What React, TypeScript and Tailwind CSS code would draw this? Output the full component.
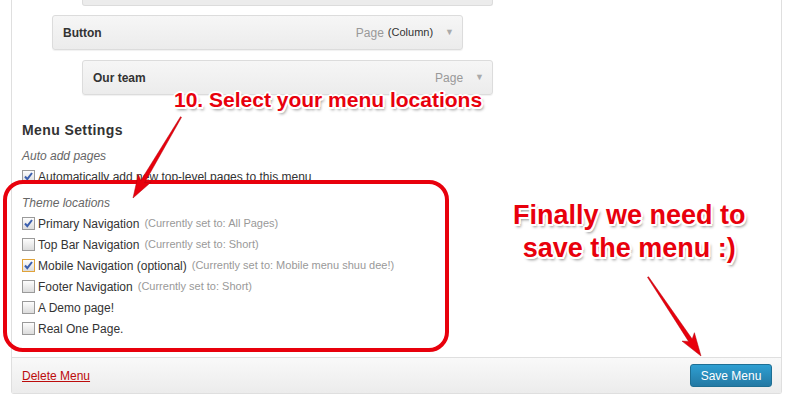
import React from 'react';

type Pt = [number, number];

// tapered arrow polygon, Skitch style
const arrowPoints = (from: Pt, to: Pt) => {
  const dx = to[0] - from[0];
  const dy = to[1] - from[1];
  const len = Math.sqrt(dx * dx + dy * dy);
  const ux = dx / len;
  const uy = dy / len;
  const nx = -uy;
  const ny = ux;
  const headLen = 22;
  const headW = 7.5;
  const at = (d: number, w: number): string =>
    `${(from[0] + ux * d + nx * w).toFixed(1)},${(from[1] + uy * d + ny * w).toFixed(1)}`;
  const neck = len - headLen;
  return [
    at(0, 0.6),
    at(neck + 3, 2.2),
    at(neck - 1, headW),
    at(len, 0),
    at(neck - 1, -headW),
    at(neck + 3, -2.2),
    at(0, -0.6),
  ].join(' ');
};

const Arrow: React.FC<{ from: Pt; to: Pt }> = ({ from, to }) => (
  <polygon points={arrowPoints(from, to)} fill="#e8000c" stroke="#b3000a" strokeWidth="0.5" />
);

const Checkbox: React.FC<{ checked?: boolean; focus?: boolean }> = ({ checked, focus }) => (
  <span
    className={`relative inline-flex h-[13px] w-[13px] shrink-0 items-center justify-center border bg-gradient-to-b from-[#fdfdfd] to-[#dcdcdc] ${
      focus ? 'border-[#e0a33a]' : 'border-[#9a9a9a]'
    }`}
  >
    {checked && (
      <svg width="11" height="11" viewBox="0 0 11 11">
        <path d="M2 5.5 L4.3 8.2 L9 2" fill="none" stroke="#3b5fae" strokeWidth="2" />
      </svg>
    )}
  </span>
);

interface Location {
  label: string;
  note?: string;
  checked?: boolean;
  focus?: boolean;
}

const locations: Location[] = [
  { label: 'Primary Navigation', note: '(Currently set to: All Pages)', checked: true },
  { label: 'Top Bar Navigation', note: '(Currently set to: Short)' },
  {
    label: 'Mobile Navigation (optional)',
    note: '(Currently set to: Mobile menu shuu dee!)',
    checked: true,
    focus: true,
  },
  { label: 'Footer Navigation', note: '(Currently set to: Short)' },
  { label: 'A Demo page!' },
  { label: 'Real One Page.' },
];

const MenuItem: React.FC<{ title: string; type: string; extra?: string; indent: string }> = ({
  title,
  type,
  extra,
  indent,
}) => (
  <div
    className={`${indent} flex h-[35px] w-[411px] items-center rounded-[3px] border border-[#dcdcdc] bg-gradient-to-b from-[#f6f6f6] to-[#ececec] pl-[10px] pr-[8px] shadow-[0_1px_1px_rgba(0,0,0,0.06)]`}
  >
    <span className="flex-1 text-[12px] font-bold text-[#333]">{title}</span>
    <span className="text-[12px] text-[#999]">{type}</span>
    {extra && <span className="ml-[4px] text-[11px] text-[#333]">{extra}</span>}
    <span className="ml-[12px] text-[9px] text-[#aaa]">▼</span>
  </div>
);

const callout =
  "absolute font-bold text-[#e8000c] [font-family:'Liberation_Sans',Arial,sans-serif] [text-shadow:-2px_0_0_#fff,2px_0_0_#fff,0_-2px_0_#fff,0_2px_0_#fff,-1.5px_-1.5px_0_#fff,1.5px_-1.5px_0_#fff,-1.5px_1.5px_0_#fff,1.5px_1.5px_0_#fff,2px_3px_3px_rgba(0,0,0,0.45)]";

export default function App() {
  return (
    <div className="relative h-[404px] w-[793px] overflow-hidden bg-white [font-family:'Liberation_Sans',Arial,sans-serif] text-[#333]">
      {/* Menu panel */}
      <div className="ml-[11px] w-[771px] rounded-b-[3px] border-x border-b border-[#dfdfdf]">
        <div className="pl-[10px]">
          <div className="ml-[60px] h-[6px] w-[411px] rounded-b-[3px] border-x border-b border-[#dcdcdc] bg-[#ececec]" />
          <div className="mt-[9px] flex flex-col gap-[10px]">
            <MenuItem title="Button" type="Page" extra="(Column)" indent="ml-[30px]" />
            <MenuItem title="Our team" type="Page" indent="ml-[60px]" />
          </div>

          {/* Menu settings */}
          <div className="mt-[25px] flex h-[20px] items-center text-[14px] font-bold tracking-[0.4px] text-[#333]">
            Menu Settings
          </div>
          <div className="mt-[5px] flex h-[21px] items-center text-[12px] italic text-[#666]">
            Auto add pages
          </div>
          <label className="flex h-[21px] items-center gap-[3px] text-[12px] text-[#333]">
            <Checkbox checked />
            <span>Automatically add new top-level pages to this menu</span>
          </label>
          <div className="mt-[5px] flex h-[21px] items-center text-[12px] italic text-[#666]">
            Theme locations
          </div>
          {locations.map((loc) => (
            <label key={loc.label} className="flex h-[21px] items-center gap-[3px] text-[12px] text-[#333]">
              <Checkbox checked={loc.checked} focus={loc.focus} />
              <span>{loc.label}</span>
              {loc.note && <span className="ml-[2px] text-[11px] text-[#999]">{loc.note}</span>}
            </label>
          ))}
        </div>

        {/* Footer */}
        <div className="mt-[18px] flex h-[36px] items-center justify-between border-t border-[#dfdfdf] bg-gradient-to-b from-[#f9f9f9] to-[#ececec] pl-[10px] pr-[9px]">
          <a href="#" className="text-[12px] text-[#bc0b0b] underline">
            Delete Menu
          </a>
          <button className="h-[23px] w-[82px] rounded-[3px] border border-[#1e6f94] bg-gradient-to-b from-[#2e9fd2] to-[#2479a4] text-[12px] text-white">
            Save Menu
          </button>
        </div>
      </div>

      {/* Annotations */}
      <div className="absolute left-[3px] top-[180px] h-[172px] w-[446px] rounded-[20px] border-[4px] border-[#e8000c]" />
      <svg className="pointer-events-none absolute inset-0" width="793" height="404">
        <Arrow from={[181, 117]} to={[133, 198]} />
        <Arrow from={[648, 277]} to={[701, 356]} />
      </svg>
      <div className={`${callout} left-[174px] top-[87px] text-[21px] leading-[26px]`}>
        10. Select your menu locations
      </div>
      <div className={`${callout} left-[513px] top-[199px] text-center text-[27px] leading-[33px]`}>
        Finally we need to
        <br />
        save the menu :)
      </div>
    </div>
  );
}
